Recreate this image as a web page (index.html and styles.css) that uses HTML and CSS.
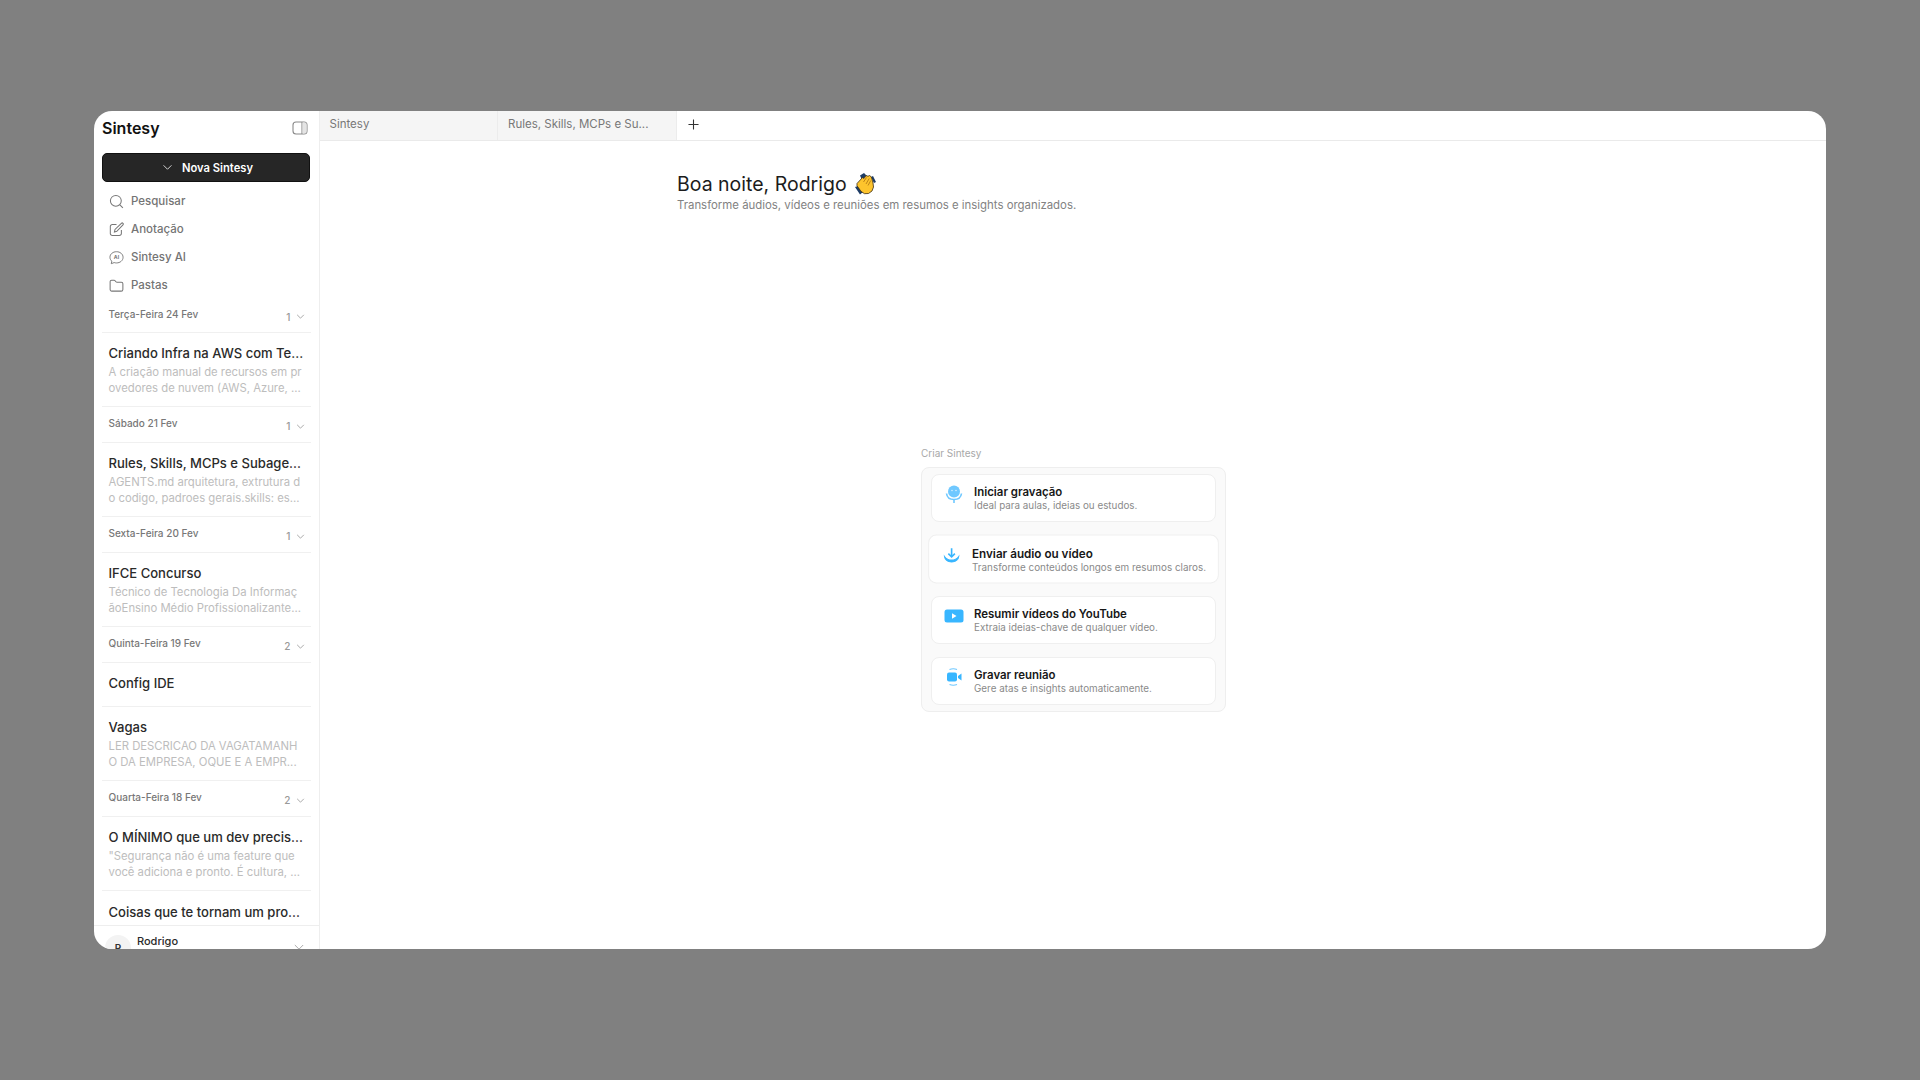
FILE: index.html
```html
<!DOCTYPE html>
<html>
<head>
    <meta charset="utf-8">
    <title>Sintesy</title>
    <link rel="stylesheet" href="styles.css">
</head>
<body>
<div class="window">
    <!-- barra lateral -->
    <aside class="sidebar">
        <div class="brand">
            <span class="brand-name">Sintesy</span>
            <svg class="panel-icon" viewBox="0 0 16 14" fill="none" stroke="#8a8a8a" stroke-width="1.1"><rect x="1" y="1" width="14" height="12" rx="3"/><path d="M10 1v12"/><path d="M10.5 1.5H13a1.6 1.6 0 0 1 1.6 1.6v7.800a1.6 1.6 0 0 1-1.6 1.6h-2.500z" fill="#e4e4e4" stroke="none"/></svg>
        </div>
        <button class="new-button">
            <svg class="new-chevron" viewBox="0 0 12 8" fill="none" stroke="#d8d8d8" stroke-width="1.1"><path d="M1.5 1.5 6 6l4.5-4.5"/></svg>
            Nova Sintesy
        </button>
        <nav class="nav">
            <div class="nav-item">
                <svg class="nav-icon" viewBox="0 0 16 16" fill="none" stroke="#777" stroke-width="1.1"><circle cx="7.3" cy="7.3" r="5.8"/><path d="m11.6 11.6 3.2 3.2"/></svg>
                Pesquisar
            </div>
            <div class="nav-item">
                <svg class="nav-icon" viewBox="0 0 16 16" fill="none" stroke="#777" stroke-width="1.1"><path d="M8 2.6H3.6a2.2 2.2 0 0 0-2.2 2.2v7.400a2.2 2.2 0 0 0 2.2 2.2H11a2.2 2.2 0 0 0 2.200-2.200V8.600"/><path d="M5.8 10.600 6.400 8l6.800-6.600a1.200 1.200 0 0 1 1.700 1.700L8.300 10z"/></svg>
                Anotação
            </div>
            <div class="nav-item">
                <svg class="nav-icon" viewBox="0 0 16 16" fill="none" stroke="#777" stroke-width="1"><path d="M8 1.800c3.900 0 7 2.600 7 6s-3.100 6-7 6c-.9 0-1.700-.1-2.500-.4L2.400 14.600l.6-2.800C1.700 10.700 1 9.300 1 7.800c0-3.400 3.100-6 7-6z"/><text x="8" y="10" class="ai-mark">AI</text></svg>
                Sintesy AI
            </div>
            <div class="nav-item">
                <svg class="nav-icon" viewBox="0 0 16 16" fill="none" stroke="#777" stroke-width="1.1"><path d="M1.200 4a1.600 1.600 0 0 1 1.600-1.600h2.600c.5 0 .9.200 1.200.6l.8 1c.3.400.7.600 1.200.6h4.600a1.600 1.600 0 0 1 1.600 1.600v6a1.800 1.800 0 0 1-1.800 1.800H3a1.800 1.800 0 0 1-1.800-1.800z"/></svg>
                Pastas
            </div>
        </nav>

        <div class="history">
            <div class="day-row first-day">
                <span>Terça-Feira 24 Fev</span>
                <span class="day-count">1 <svg class="day-chevron" viewBox="0 0 10 6" fill="none" stroke="#999" stroke-width="1"><path d="m1 1 4 4 4-4"/></svg></span>
            </div>
            <div class="note">
                <div class="note-title">Criando Infra na AWS com Te...</div>
                <div class="note-text">A criação manual de recursos em pr<br>ovedores de nuvem (AWS, Azure, ...</div>
            </div>
            <div class="day-row">
                <span>Sábado 21 Fev</span>
                <span class="day-count">1 <svg class="day-chevron" viewBox="0 0 10 6" fill="none" stroke="#999" stroke-width="1"><path d="m1 1 4 4 4-4"/></svg></span>
            </div>
            <div class="note">
                <div class="note-title">Rules, Skills, MCPs e Subage...</div>
                <div class="note-text">AGENTS.md arquitetura, extrutura d<br>o codigo, padroes gerais.skills: es...</div>
            </div>
            <div class="day-row">
                <span>Sexta-Feira 20 Fev</span>
                <span class="day-count">1 <svg class="day-chevron" viewBox="0 0 10 6" fill="none" stroke="#999" stroke-width="1"><path d="m1 1 4 4 4-4"/></svg></span>
            </div>
            <div class="note">
                <div class="note-title">IFCE Concurso</div>
                <div class="note-text">Técnico de Tecnologia Da Informaç<br>ãoEnsino Médio Profissionalizante...</div>
            </div>
            <div class="day-row">
                <span>Quinta-Feira 19 Fev</span>
                <span class="day-count">2 <svg class="day-chevron" viewBox="0 0 10 6" fill="none" stroke="#999" stroke-width="1"><path d="m1 1 4 4 4-4"/></svg></span>
            </div>
            <div class="note note-short">
                <div class="note-title">Config IDE</div>
            </div>
            <div class="note">
                <div class="note-title">Vagas</div>
                <div class="note-text">LER DESCRICAO DA VAGATAMANH<br>O DA EMPRESA, OQUE E A EMPR...</div>
            </div>
            <div class="day-row">
                <span>Quarta-Feira 18 Fev</span>
                <span class="day-count">2 <svg class="day-chevron" viewBox="0 0 10 6" fill="none" stroke="#999" stroke-width="1"><path d="m1 1 4 4 4-4"/></svg></span>
            </div>
            <div class="note">
                <div class="note-title">O MÍNIMO que um dev precis...</div>
                <div class="note-text">"Segurança não é uma feature que<br>você adiciona e pronto. É cultura, ...</div>
            </div>
            <div class="note note-last">
                <div class="note-title">Coisas que te tornam um pro...</div>
            </div>
        </div>

        <div class="account">
            <div class="avatar">R</div>
            <div class="account-name">Rodrigo</div>
            <svg class="account-chevron" viewBox="0 0 12 8" fill="none" stroke="#999" stroke-width="1"><path d="m1 1 5 5 5-5"/></svg>
        </div>
    </aside>

    <!-- area principal -->
    <main class="main">
        <div class="tabs">
            <div class="tab">Sintesy</div>
            <div class="tab">Rules, Skills, MCPs e Su...</div>
            <svg class="tab-plus" viewBox="0 0 12 12" fill="none" stroke="#333" stroke-width="1.2"><path d="M6 .5v11M.5 6h11"/></svg>
        </div>
        <div class="content">
            <h1 class="greeting">Boa noite, Rodrigo
                <svg class="wave" viewBox="0 0 24 24">
                    <path d="M7 3.500 11 1l2.500 2.500L9 8zM2 15l3-1 5 6-3 2.500zM20 4l3 6-2 1-3-6z" fill="#1d3c66"/>
                    <path d="M4 11.500 9.500 5.500l1.500 1 2-3 2 .8 1.500-.8 1.700 1.300.8 2.400 1 3.800.5 4-1.500 4-3.500 2.500-4 .2-3.500-2.300-2.500-3.600-1.500-2z" fill="#fdc42d" stroke="#3b2b12" stroke-width=".8" stroke-linejoin="round"/>
                    <path d="M10.500 10 13.500 5.500M13 12l3.200-5.500M15 13.500l2.800-5" stroke="#b77d14" stroke-width=".9" fill="none"/>
                </svg>
            </h1>
            <p class="subtitle">Transforme áudios, vídeos e reuniões em resumos e insights organizados.</p>

            <div class="create">
                <div class="create-label">Criar Sintesy</div>
                <div class="create-box">
                    <div class="create-card">
                        <svg class="card-icon" viewBox="0 0 20 20"><circle cx="10" cy="7.5" r="6" fill="#6fc8ff"/><circle cx="8" cy="6.500" r=".8" fill="#d5eefe"/><circle cx="12" cy="6.500" r=".8" fill="#d5eefe"/><path d="M2.500 9.500c.5 4 3.500 6 7.500 6s7-2 7.500-6" fill="none" stroke="#6fc8ff" stroke-width="1.600"/><path d="M10 15v4" stroke="#6fc8ff" stroke-width="1.600"/></svg>
                        <div>
                            <div class="card-title">Iniciar gravação</div>
                            <div class="card-text">Ideal para aulas, ideias ou estudos.</div>
                        </div>
                    </div>
                    <div class="create-card card-active">
                        <svg class="card-icon" viewBox="0 0 20 20"><path d="M10 2.500v8M6.800 7.800 10 11l3.200-3.200" fill="none" stroke="#38b6ff" stroke-width="1.600"/><path d="M3 10.500c.3 3 3 5.500 7 5.500s6.700-2.500 7-5.500c-2 2.800-4.600 3.500-7 3.500s-5-.7-7-3.500z" fill="#38b6ff" stroke="#38b6ff"/></svg>
                        <div>
                            <div class="card-title">Enviar áudio ou vídeo</div>
                            <div class="card-text">Transforme conteúdos longos em resumos claros.</div>
                        </div>
                    </div>
                    <div class="create-card">
                        <svg class="card-icon" viewBox="0 0 20 20"><rect x=".5" y="3.500" width="19" height="13" rx="2.500" fill="#38b6ff"/><path d="m8 7.300 4.500 2.700L8 12.700z" fill="#fff"/></svg>
                        <div>
                            <div class="card-title">Resumir vídeos do YouTube</div>
                            <div class="card-text">Extraia ideias-chave de qualquer vídeo.</div>
                        </div>
                    </div>
                    <div class="create-card">
                        <svg class="card-icon" viewBox="0 0 20 20"><rect x="3" y="5.500" width="10" height="9" rx="2" fill="#38b6ff"/><path d="m14 9 3.500-2.500v7L14 11z" fill="#38b6ff"/><path d="M5.500 2.500c2.500-1 5-1 7.500 0M5.500 17.500c2.500 1 5 1 7.500 0" fill="none" stroke="#6fc8ff" stroke-width="1.200"/></svg>
                        <div>
                            <div class="card-title">Gravar reunião</div>
                            <div class="card-text">Gere atas e insights automaticamente.</div>
                        </div>
                    </div>
                </div>
            </div>
        </div>
    </main>
</div>
</body>
</html>
```

FILE: styles.css
```css
* {
    box-sizing: border-box;
}
body {
    margin: 0;
    height: 1080px;
    padding: 111px 94px 131px;
    background-color: #808080;
    font-family: Inter, 'Liberation Sans', sans-serif;
    overflow: hidden;
}
.window {
    display: flex;
    height: 838px;
    background-color: #fff;
    border-radius: 18px;
    overflow: hidden;
}

/* barra lateral */
.sidebar {
    display: flex;
    flex-direction: column;
    flex: 0 0 225.5px;
    border-right: 1px solid #eee;
    padding: 0 8px;
}
.brand {
    display: flex;
    align-items: center;
    justify-content: space-between;
    height: 34px;
    padding-right: 3px;
}
.brand-name {
    font-size: 16px;
    font-weight: 600;
    color: #111;
}
.panel-icon {
    width: 16px;
    height: 14px;
}
.new-button {
    display: flex;
    align-items: center;
    justify-content: center;
    gap: 9px;
    height: 29px;
    margin-top: 8px;
    width: 208px;
    padding: 0 0 0 3px;
    background-color: #262626;
    border: 1px solid #111;
    border-radius: 5px;
    color: #fff;
    font-family: inherit;
    font-size: 11.2px;
    font-weight: 600;
}
.new-chevron {
    width: 11px;
    height: 7px;
}
.nav {
    margin-top: 5px;
}
.nav-item {
    display: flex;
    align-items: center;
    gap: 7px;
    height: 28px;
    padding-left: 7px;
    color: #747474;
    font-size: 11.5px;
    font-weight: 500;
}
.nav-icon {
    width: 15px;
    height: 15px;
}
.ai-mark {
    font-family: Inter, sans-serif;
    font-size: 5.5px;
    font-weight: 700;
    text-anchor: middle;
    fill: #777;
    stroke: none;
}

/* lista de notas */
.history {
    flex: 1;
    min-height: 0;
    overflow: hidden;
}
.day-row {
    display: flex;
    align-items: center;
    justify-content: space-between;
    height: 36px;
    padding: 0 6px 3px 6.5px;
    border-bottom: 1px solid #f0f0f0;
    color: #777;
    font-size: 10px;
    font-weight: 500;
}
.first-day {
    height: 34px;
    padding-bottom: 4px;
}
.day-count {
    display: flex;
    align-items: center;
    gap: 5px;
    margin-top: 6px;
    color: #999;
}
.day-chevron {
    width: 9px;
    height: 5px;
}
.note {
    padding: 11.5px 6px 0 6.5px;
    height: 74px;
    border-bottom: 1px solid #f0f0f0;
}
.note-short {
    height: 44px;
}
.note-last {
    height: 34px;
    padding-top: 13px;
    border-bottom: 0;
}
.note-title {
    color: #2a2a2a;
    font-size: 13.05px;
    font-weight: 500;
    line-height: 16px;
    white-space: nowrap;
}
.note-text {
    margin-top: 4.5px;
    color: #bdbdbd;
    font-size: 11.3px;
    line-height: 15.5px;
    white-space: nowrap;
}
.account {
    display: flex;
    flex: 0 0 24px;
    align-items: flex-start;
    margin: 0 -8px;
    padding: 9px 15px 0 11px;
    border-top: 1px solid #eee;
    overflow: hidden;
}
.avatar {
    flex: 0 0 26px;
    height: 26px;
    border-radius: 50%;
    background-color: #f3f3f3;
    color: #333;
    font-size: 10px;
    font-weight: 600;
    line-height: 26px;
    text-align: center;
}
.account-name {
    flex: 1;
    margin: -1px 0 0 6px;
    color: #2a2a2a;
    font-size: 11px;
    font-weight: 500;
}
.account-chevron {
    width: 10px;
    height: 7px;
    margin-top: 9px;
}

/* area principal */
.main {
    flex: 1;
    min-width: 0;
}
.tabs {
    display: flex;
    align-items: center;
    height: 30px;
    border-bottom: 1px solid #eaeaea;
}
.tab {
    width: 178.5px;
    height: 100%;
    padding-left: 10px;
    border-right: 1px solid #ececec;
    background-color: #f5f5f5;
    color: #777;
    font-size: 11.5px;
    line-height: 27px;
}
.tab-plus {
    width: 11px;
    height: 11px;
    margin: -2px 0 0 11px;
}
.content {
    padding-top: 31px;
    padding-left: 357.5px;
}
.greeting {
    display: flex;
    align-items: center;
    gap: 6.5px;
    margin: 0;
    color: #1c1c1c;
    font-size: 19.5px;
    font-weight: 400;
    line-height: 24px;
}
.wave {
    width: 24px;
    height: 24px;
}
.subtitle {
    margin: 2px 0 0;
    color: #828282;
    font-size: 11.4px;
    line-height: 15px;
}
.create {
    width: 305px;
    margin: 234px 0 0 244px;
}
.create-label {
    color: #a8a8a8;
    font-size: 10px;
    line-height: 12px;
}
.create-box {
    display: flex;
    flex-direction: column;
    gap: 13px;
    height: 245px;
    margin-top: 8px;
    padding: 5.5px 9px;
    background-color: #fafafa;
    border: 1.5px solid #eee;
    border-radius: 8px;
}
.create-card {
    display: flex;
    align-items: center;
    gap: 10px;
    height: 48px;
    padding: 2px 0 0 12px;
    background-color: #fff;
    border: 1.5px solid #efefef;
    border-radius: 8px;
}
.card-active {
    transform: scale(1.02);
}
.card-active .card-text {
    font-size: 9.7px;
}
.card-icon {
    width: 20px;
    height: 20px;
    margin-top: -9px;
}
.card-title {
    color: #171717;
    font-size: 11.45px;
    font-weight: 600;
    line-height: 14px;
}
.card-text {
    color: #8a8a8a;
    font-size: 9.85px;
    line-height: 13px;
}
```
